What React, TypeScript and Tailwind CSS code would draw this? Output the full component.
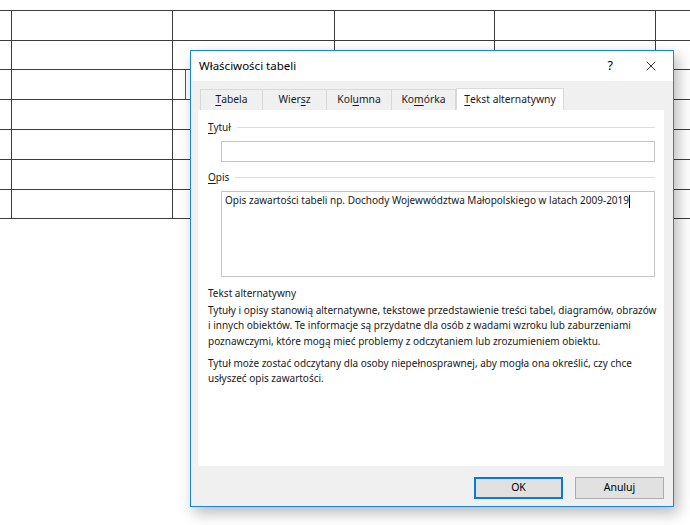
import { X } from 'lucide-react'

const cols = [160, 161, 162, 160, 161, 160, 60]
const rows = [30, 29, 30, 30, 30, 30, 29]

function U({ children }: { children: string }) {
  return <span className="underline underline-offset-2 decoration-1">{children}</span>
}

function Tab({ children, active, w }: { children: React.ReactNode; active?: boolean; w: string }) {
  if (active) {
    return (
      <div className={`${w} h-[23px] -mb-px bg-white border-x border-t border-[#d9d9d9] flex items-center justify-center`}>
        {children}
      </div>
    )
  }
  return (
    <div className={`${w} h-[21px] bg-[#f0f0f0] border-t border-r border-[#d9d9d9] first:border-l flex items-center justify-center`}>
      {children}
    </div>
  )
}

function GroupLabel({ children }: { children: React.ReactNode }) {
  return (
    <div className="flex items-center gap-[6px] pr-[9px]">
      <span>{children}</span>
      <div className="flex-1 h-px bg-[#dcdcdc]" />
    </div>
  )
}

export default function App() {
  return (
    <div
      className="relative w-[690px] h-[525px] overflow-hidden bg-white text-[#1a1a1a] text-[10px]"
      style={{ fontFamily: '"Noto Sans", "Open Sans", sans-serif' }}
    >
      {/* Document table behind the dialog */}
      <table className="absolute left-[-149px] top-[10px] w-[1024px] table-fixed border-collapse">
        <colgroup>
          {cols.map((w, c) => (
            <col key={c} style={{ width: w }} />
          ))}
        </colgroup>
        <tbody>
          {rows.map((h, r) => (
            <tr key={r}>
              {cols.map((_, c) => (
                <td key={c} className="border border-[#3c3c3c] p-0" style={{ height: h }} />
              ))}
            </tr>
          ))}
        </tbody>
      </table>
      <div className="absolute left-[185px] top-[69px] w-px h-[30px] bg-[#555]" />

      {/* Dialog window */}
      <div className="absolute left-[190px] top-[50px] w-[484px] h-[457px] border border-[#1a86d9] bg-[#f0f0f0] shadow-[4px_6px_14px_rgba(0,0,0,0.28)] flex flex-col">
        <div className="h-[30px] bg-white flex items-center pl-[8px] pr-[14px]">
          <span className="text-[11.5px] text-black">Właściwości tabeli</span>
          <span className="ml-auto text-[12.5px] text-black">?</span>
          <X className="ml-[30px] w-[16px] h-[16px] text-black" strokeWidth={1.2} />
        </div>

        <div className="flex-1 flex flex-col px-[7px] pt-[7px]">
          <div className="flex items-end pl-[2px] h-[22px] text-[10.3px]">
            <Tab w="w-[63px]"><U>T</U>abela</Tab>
            <Tab w="w-[64px]">Wier<U>s</U>z</Tab>
            <Tab w="w-[65px]">Kol<U>u</U>mna</Tab>
            <Tab w="w-[64px]">Ko<U>m</U>órka</Tab>
            <Tab w="w-[108px]" active><U>T</U>ekst alternatywny</Tab>
          </div>

          <div className="w-[466px] h-[356px] bg-white pl-[10px] pt-[10px]">
            <GroupLabel><U>T</U>ytuł</GroupLabel>
            <div className="ml-[13px] mr-[9px] mt-[6px] h-[21px] border border-[#c4c4c4]" />

            <div className="mt-[8px]">
              <GroupLabel><U>O</U>pis</GroupLabel>
            </div>
            <div className="ml-[13px] mr-[9px] mt-[6px] h-[86px] border border-[#c4c4c4] px-[3px] pt-[1px] leading-[15px] whitespace-nowrap">
              Opis zawartości tabeli np. Dochody Wojewwództwa Małopolskiego w latach 2009-2019
              <span className="inline-block w-px h-[13px] bg-black align-middle" />
            </div>

            <div className="mt-[9px] pr-[8px] leading-[15.5px] whitespace-nowrap">
              <p>Tekst alternatywny</p>
              <p className="mt-[1px]">
                Tytuły i opisy stanowią alternatywne, tekstowe przedstawienie treści tabel, diagramów, obrazów
                <br />
                i innych obiektów. Te informacje są przydatne dla osób z wadami wzroku lub zaburzeniami
                <br />
                poznawczymi, które mogą mieć problemy z odczytaniem lub zrozumieniem obiektu.
              </p>
              <p className="mt-[6.5px]">
                Tytuł może zostać odczytany dla osoby niepełnosprawnej, aby mogła ona określić, czy chce
                <br />
                usłyszeć opis zawartości.
              </p>
            </div>
          </div>

          <div className="flex justify-end gap-[12px] pr-[2px] mt-[11px] text-[10.5px]">
            <button className="w-[89px] h-[22px] bg-[#e1e1e1] border-2 border-[#0a78d7] text-black">OK</button>
            <button className="w-[89px] h-[22px] bg-[#e1e1e1] border border-[#adadad] text-black">Anuluj</button>
          </div>
        </div>
      </div>
    </div>
  )
}
